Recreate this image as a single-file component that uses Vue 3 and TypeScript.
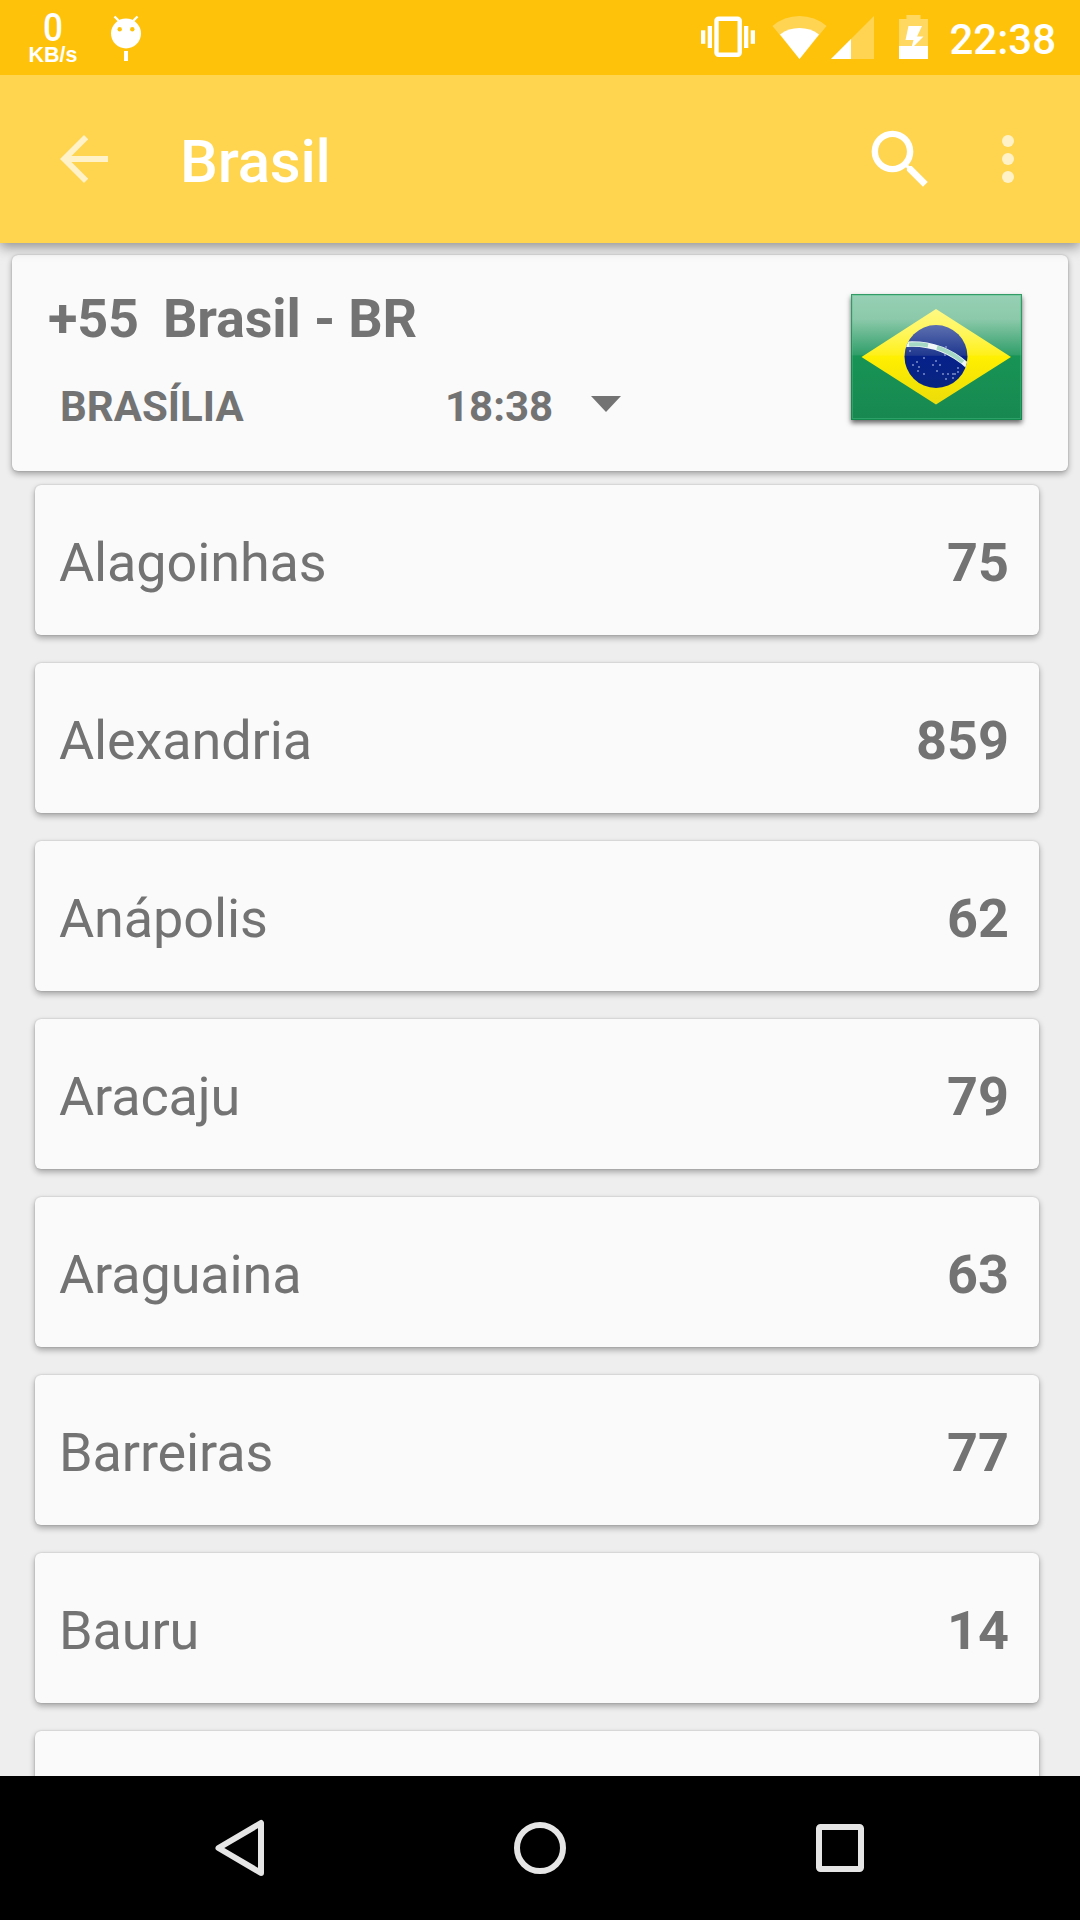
<script setup lang="ts">
interface City {
  name: string
  code: string
}

const cities: City[] = [
  { name: 'Alagoinhas', code: '75' },
  { name: 'Alexandria', code: '859' },
  { name: 'Anápolis', code: '62' },
  { name: 'Aracaju', code: '79' },
  { name: 'Araguaina', code: '63' },
  { name: 'Barreiras', code: '77' },
  { name: 'Bauru', code: '14' },
  { name: '', code: '' },
]

const stars: [number, number][] = [
  [58, 56], [72, 63], [61, 70], [65, 67], [67, 72], [66, 76], [72, 79],
  [84, 66], [81, 70], [88, 70], [85, 76], [94, 52], [93, 60], [91, 79],
  [96, 79], [101, 79], [101, 83], [94, 84], [106, 73], [106, 77], [103, 79],
]
</script>

<template>
  <div class="screen">
    <header class="status">
      <div class="speed">
        <span class="speed-value">0</span>
        <span class="speed-unit">KB/s</span>
      </div>
      <svg class="bug" width="32" height="48" viewBox="110 14 32 48">
        <path d="M114.500 16.500l6 6M137.500 16.500l-6 6" stroke="#fff" stroke-width="2.400" />
        <circle cx="126" cy="33.500" r="15" fill="#fff" />
        <circle cx="119.700" cy="29.300" r="2.200" fill="#ffc20a" />
        <circle cx="132.300" cy="29.300" r="2.200" fill="#ffc20a" />
        <rect x="124" y="51" width="4" height="10" fill="#fff" />
      </svg>
      <svg class="indicators" width="230" height="48" viewBox="700 14 230 48" fill="#fff">
        <rect x="716.500" y="18.800" width="23.200" height="36" rx="2" fill="none" stroke="#fff" stroke-width="4.400" />
        <rect x="707.700" y="26" width="4.300" height="22" />
        <rect x="701" y="30.300" width="4.300" height="13.500" />
        <rect x="744" y="26" width="4.300" height="22" />
        <rect x="750.700" y="30.300" width="4.300" height="13.500" />
        <path d="M799.500 59L772.500 26A41.500 41.500 0 0 1 826.500 26Z" opacity=".3" />
        <path d="M799.500 59L780 34.500A33 33 0 0 1 819 34.500Z" />
        <path d="M831 59H874V16Z" opacity=".3" />
        <path d="M831 59H851V39Z" />
        <path d="M899 19H906.500V15H920.500V19H928V46H899Z" opacity=".36" />
        <path d="M899 46H928V59H899Z" />
        <path d="M908.500 26H922L917 36.500H923.500L911 49L913.500 40H905.500Z" />
      </svg>
      <span class="clock">22:38</span>
    </header>

    <div class="appbar">
      <svg class="back" width="72" height="72" viewBox="0 0 24 24">
        <path fill="#fff" d="M20 11H7.830l5.590-5.590L12 4l-8 8 8 8 1.410-1.410L7.830 13H20v-2z" />
      </svg>
      <h1 class="title">Brasil</h1>
      <svg class="search" width="77" height="77" viewBox="0 0 24 24">
        <path fill="#fff" d="M15.500 14h-.790l-.280-.270A6.471 6.471 0 0 0 16 9.500 6.500 6.500 0 1 0 9.500 16c1.610 0 3.090-.590 4.230-1.570l.270.280v.790l5 4.990L20.490 19l-4.990-5zm-6 0C7.010 14 5 11.990 5 9.500S7.010 5 9.500 5 14 7.010 14 9.500 11.990 14 9.500 14z" />
      </svg>
      <svg class="more" width="72" height="72" viewBox="0 0 24 24" fill="#fff">
        <circle cx="12" cy="6" r="2" />
        <circle cx="12" cy="12" r="2" />
        <circle cx="12" cy="18" r="2" />
      </svg>
    </div>

    <main class="content">
      <section class="country">
        <div class="info">
          <div class="heading"><span class="prefix">+55</span><span>Brasil - BR</span></div>
          <div class="capital">
            <span class="capital-name">BRASÍLIA</span>
            <span class="capital-time">18:38</span>
            <svg class="caret" width="30" height="16" viewBox="0 0 30 16"><path d="M0 0H30L15 16Z" fill="#737373" /></svg>
          </div>
        </div>
        <svg class="flag" width="171" height="126" viewBox="0 0 171 126">
          <defs>
            <linearGradient id="field" x1="0" y1="0" x2="0" y2="1">
              <stop offset="0" stop-color="#98d0b5" />
              <stop offset=".2" stop-color="#8bc9aa" />
              <stop offset=".485" stop-color="#309e69" />
              <stop offset=".49" stop-color="#189456" />
              <stop offset="1" stop-color="#178850" />
            </linearGradient>
            <linearGradient id="rhombus" x1="0" y1="0" x2="0" y2="1">
              <stop offset="0" stop-color="#fff983" />
              <stop offset=".25" stop-color="#fff65c" />
              <stop offset=".48" stop-color="#fff01a" />
              <stop offset=".5" stop-color="#ffef00" />
              <stop offset="1" stop-color="#ecdc0a" />
            </linearGradient>
            <linearGradient id="globe" x1="0" y1="0" x2="0" y2="1">
              <stop offset="0" stop-color="#5c70b0" />
              <stop offset=".48" stop-color="#20388f" />
              <stop offset=".5" stop-color="#06218a" />
              <stop offset="1" stop-color="#092581" />
            </linearGradient>
            <clipPath id="disc"><circle cx="85" cy="62.500" r="31.500" /></clipPath>
          </defs>
          <rect width="171" height="126" fill="url(#field)" />
          <rect x=".5" y=".5" width="170" height="125" fill="none" stroke="#128a4c" stroke-opacity=".75" />
          <rect x="1.500" y="1.500" width="168" height="123" fill="none" stroke="#4fc48c" stroke-opacity=".4" />
          <path d="M10.500 63L85 15L160 63L85 110.500Z" fill="url(#rhombus)" />
          <circle cx="85" cy="62.500" r="31.500" fill="url(#globe)" />
          <g clip-path="url(#disc)">
            <path d="M52 50.500Q90 47 118 73" fill="none" stroke="#f0f7f6" stroke-width="5.500" />
            <path d="M58 50.500Q69 49.500 77 51.500M86 53.500Q100 58 112 68" fill="none" stroke="#a5d8c5" stroke-width="4" />
            <rect v-for="([x, y], i) in stars" :key="i" :x="x" :y="y" width="2" height="2" fill="#8fa0d2" opacity=".65" />
          </g>
        </svg>
      </section>

      <ul class="list">
        <li v-for="(city, i) in cities" :key="i" class="row">
          <span class="city">{{ city.name }}</span>
          <strong>{{ city.code }}</strong>
        </li>
      </ul>
    </main>

    <nav class="nav">
      <svg width="60" height="60" viewBox="0 0 60 60">
        <path d="M51 5V55L8.500 30Z" fill="none" stroke="#e5e5e5" stroke-width="6" stroke-linejoin="round" />
      </svg>
      <svg width="60" height="60" viewBox="0 0 60 60">
        <circle cx="30" cy="30" r="23" fill="none" stroke="#e5e5e5" stroke-width="6" />
      </svg>
      <svg width="60" height="60" viewBox="0 0 60 60">
        <rect x="9" y="9" width="42" height="42" rx="1.500" fill="none" stroke="#e5e5e5" stroke-width="6" />
      </svg>
    </nav>
  </div>
</template>

<style>
body {
  margin: 0;
}
</style>

<style scoped>
.screen {
  width: 1080px;
  height: 1920px;
  overflow: hidden;
  display: flex;
  flex-direction: column;
  background: #eee;
  color: #737373;
  font-family: Roboto, "Noto Sans", sans-serif;
}
svg {
  display: block;
  flex: none;
}
.status {
  flex: none;
  height: 75px;
  box-sizing: border-box;
  display: flex;
  align-items: flex-start;
  background: #ffc20a;
  color: #fff;
  position: relative;
  z-index: 2;
}
.speed {
  width: 50px;
  margin-left: 28px;
  padding-top: 13px;
  display: flex;
  flex-direction: column;
  align-items: center;
}
.speed-value {
  font-size: 39px;
  line-height: 31px;
  font-weight: 500;
  transform: scaleX(0.9);
}
.speed-unit {
  font: bold 21.5px/22px "Liberation Sans", sans-serif;
  white-space: nowrap;
}
.bug {
  margin: 14px 0 0 32px;
}
.indicators {
  margin: 14px 0 0 558px;
}
.clock {
  margin-left: 19.500px;
  padding-top: 15px;
  font-size: 42px;
  line-height: 49px;
  font-weight: 500;
}
.appbar {
  flex: none;
  height: 168px;
  display: flex;
  align-items: center;
  background: #ffd54f;
  color: #fff;
  box-shadow: 0 4px 12px rgba(0, 0, 0, 0.4);
  position: relative;
  z-index: 1;
}
.back {
  margin-left: 48px;
  opacity: 0.69;
}
.title {
  margin: 6px 0 0 60px;
  font-size: 60px;
  line-height: 70px;
  font-weight: 500;
  letter-spacing: -0.2px;
}
.search {
  margin-left: auto;
}
.more {
  margin: 0 36px 0 33px;
  opacity: 0.69;
}
.content {
  flex: 1;
  min-height: 0;
  overflow: hidden;
}
.country {
  height: 216px;
  margin: 12px 12px 14px;
  box-sizing: border-box;
  padding: 32px 46px 0 36px;
  display: flex;
  justify-content: space-between;
  align-items: flex-start;
  font-weight: 700;
}
.country,
.row {
  background: #fafafa;
  border-radius: 6px;
  box-shadow: 0 3px 6px rgba(0, 0, 0, 0.32), 0 0 2px rgba(0, 0, 0, 0.2);
}
.heading {
  display: flex;
  gap: 24px;
  font-size: 54px;
  line-height: 64px;
  letter-spacing: -0.15px;
}
.capital {
  display: flex;
  align-items: center;
  margin: 31px 0 0 12px;
  font-size: 42px;
  line-height: 50px;
}
.capital-name {
  width: 385px;
}
.capital-time {
  width: 146px;
}
.caret {
  margin-bottom: 6px;
}
.flag {
  margin-top: 7px;
  box-shadow: 0 3px 5px rgba(0, 0, 0, 0.6);
}
.list {
  margin: 0;
  padding: 0 41px 0 35px;
  list-style: none;
  display: flex;
  flex-direction: column;
  gap: 28px;
}
.row {
  flex: none;
  height: 150px;
  box-sizing: border-box;
  padding: 6px 30px 0 24px;
  display: flex;
  align-items: center;
  justify-content: space-between;
  font-size: 54px;
  line-height: 64px;
}
.city {
  letter-spacing: -0.13px;
}
.nav {
  flex: none;
  height: 144px;
  box-sizing: border-box;
  padding: 0 210px;
  display: flex;
  align-items: center;
  justify-content: space-between;
  background: #000;
  position: relative;
}
</style>
